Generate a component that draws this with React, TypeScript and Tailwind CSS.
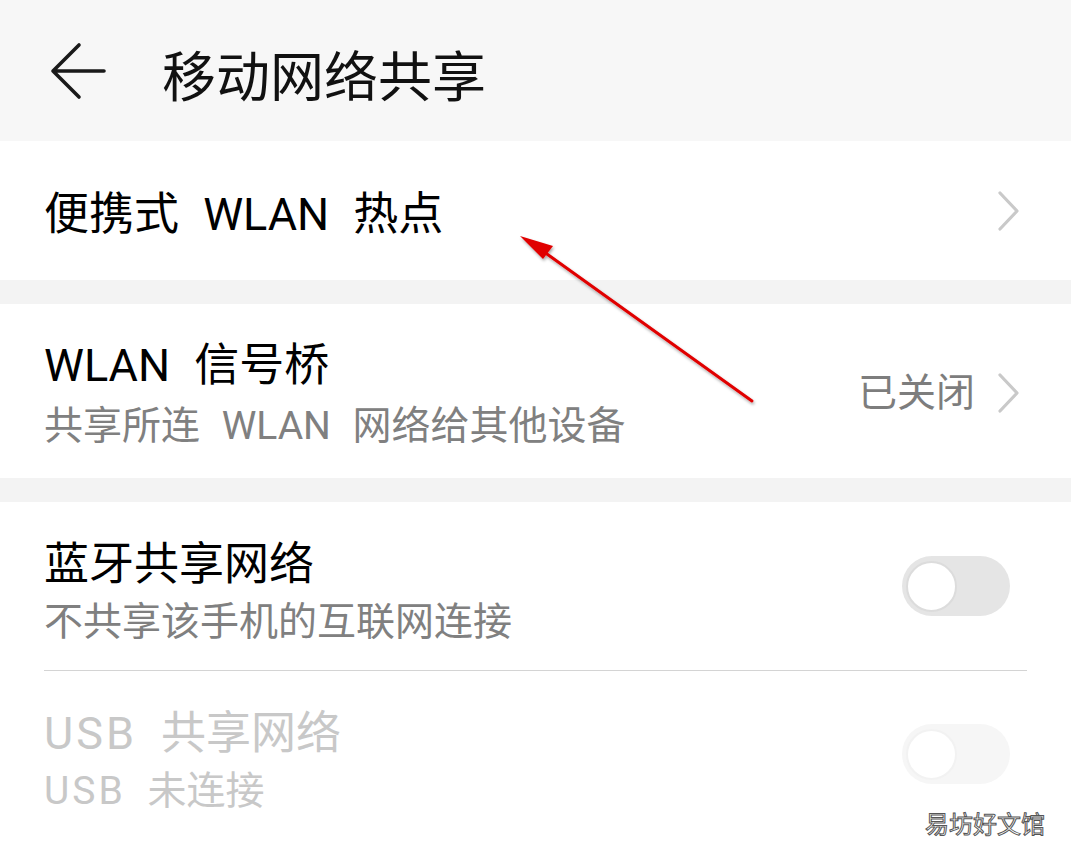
import React from "react";

const font = { fontFamily: 'Roboto, "Noto Sans CJK SC", "Noto Sans", sans-serif' };
const cjk = { fontFamily: '"Noto Sans CJK SC", "Noto Sans", sans-serif' };

function Chevron() {
  return (
    <svg width="24" height="40" viewBox="0 0 24 40" className="shrink-0">
      <polyline points="3,2 20,20 3,38" fill="none" stroke="#c9c9c9" strokeWidth="3.2" strokeLinecap="round" strokeLinejoin="round" />
    </svg>
  );
}

function Toggle({ faded }: { faded?: boolean }) {
  return (
    <div
      className={
        "w-[108px] h-[60px] rounded-full p-[4px] flex items-center shrink-0 " +
        (faded ? "bg-[#f6f6f6]" : "bg-[#e5e5e5]")
      }
    >
      <div
        className={
          "w-[51px] h-[51px] rounded-full bg-white border-[2px] " +
          (faded ? "border-[#f2f2f2]" : "border-[#dcdcdc]")
        }
      />
    </div>
  );
}

export default function App() {
  return (
    <div className="relative w-[1071px] h-[857px] overflow-hidden bg-white" style={font}>
      {/* Header */}
      <div className="h-[141px] bg-[#f7f7f7] flex items-center pl-[50px]">
        <svg width="58" height="58" viewBox="0 0 58 58" className="shrink-0">
          <path d="M29 3 L3 29 L29 55 M3 29 L54 29" fill="none" stroke="#1a1a1a" strokeWidth="3.6" strokeLinecap="round" strokeLinejoin="round" />
        </svg>
        <div className="ml-[54px] text-[54px] leading-[62px] text-[#111] mt-[6px]" style={cjk}>移动网络共享</div>
      </div>

      {/* Row 1 */}
      <div className="h-[139px] flex items-center justify-between pl-[44px] pr-[50px]">
        <div className="text-[45px] leading-[56px] text-black mt-[9px] [word-spacing:13px]">便携式 WLAN 热点</div>
        <Chevron />
      </div>

      <div className="h-[24px] bg-[#f3f3f3]" />

      {/* Row 2 */}
      <div className="h-[174px] flex items-start justify-between pl-[44px] pr-[50px]">
        <div className="pt-[31px] flex flex-col">
          <div className="text-[45px] leading-[62px] text-black [word-spacing:13px]">WLAN 信号桥</div>
          <div className="text-[39px] leading-[58px] text-[#808080] [word-spacing:12px]">共享所连 WLAN 网络给其他设备</div>
        </div>
        <div className="self-center flex items-center gap-[22px] mt-[4px]">
          <span className="text-[39px] leading-[48px] text-[#7d7d7d]">已关闭</span>
          <Chevron />
        </div>
      </div>

      <div className="h-[24px] bg-[#f3f3f3]" />

      {/* Row 3 */}
      <div className="h-[168px] flex items-start justify-between pl-[44px] pr-[61px]">
        <div className="pt-[34px] flex flex-col">
          <div className="text-[45px] leading-[58px] text-black">蓝牙共享网络</div>
          <div className="text-[39px] leading-[57px] text-[#808080]">不共享该手机的互联网连接</div>
        </div>
        <div className="mt-[54px]">
          <Toggle />
        </div>
      </div>

      <div className="mx-[44px] h-px bg-[#d4d4d4]" />

      {/* Row 4 */}
      <div className="h-[186px] flex items-start justify-between pl-[44px] pr-[61px]">
        <div className="pt-[34px] flex flex-col">
          <div className="text-[45px] leading-[58px] text-[#c8c8c8] [word-spacing:13px]">
            <span className="tracking-[3px]">USB</span> 共享网络
          </div>
          <div className="text-[39px] leading-[56px] text-[#c8c8c8] [word-spacing:12px]">
            <span className="tracking-[3px]">USB</span> 未连接
          </div>
        </div>
        <div className="mt-[53px]">
          <Toggle faded />
        </div>
      </div>

      {/* Red annotation arrow */}
      <svg className="absolute left-0 top-0 pointer-events-none" width="1071" height="857">
        <defs>
          <filter id="sh" x="-10%" y="-10%" width="120%" height="120%">
            <feDropShadow dx="1" dy="2" stdDeviation="1.5" floodColor="#000" floodOpacity="0.35" />
          </filter>
        </defs>
        <g filter="url(#sh)">
          <line x1="752" y1="401" x2="540" y2="249" stroke="#e00000" strokeWidth="3" strokeLinecap="round" />
          <polygon points="520,236 553,246 543,259" fill="#e00000" />
        </g>
      </svg>

      {/* Watermark */}
      <div className="absolute left-[925px] top-[808px] text-[24px] leading-[30px] text-white [-webkit-text-stroke:1px_#555]" style={cjk}>
        易坊好文馆
      </div>
    </div>
  );
}
